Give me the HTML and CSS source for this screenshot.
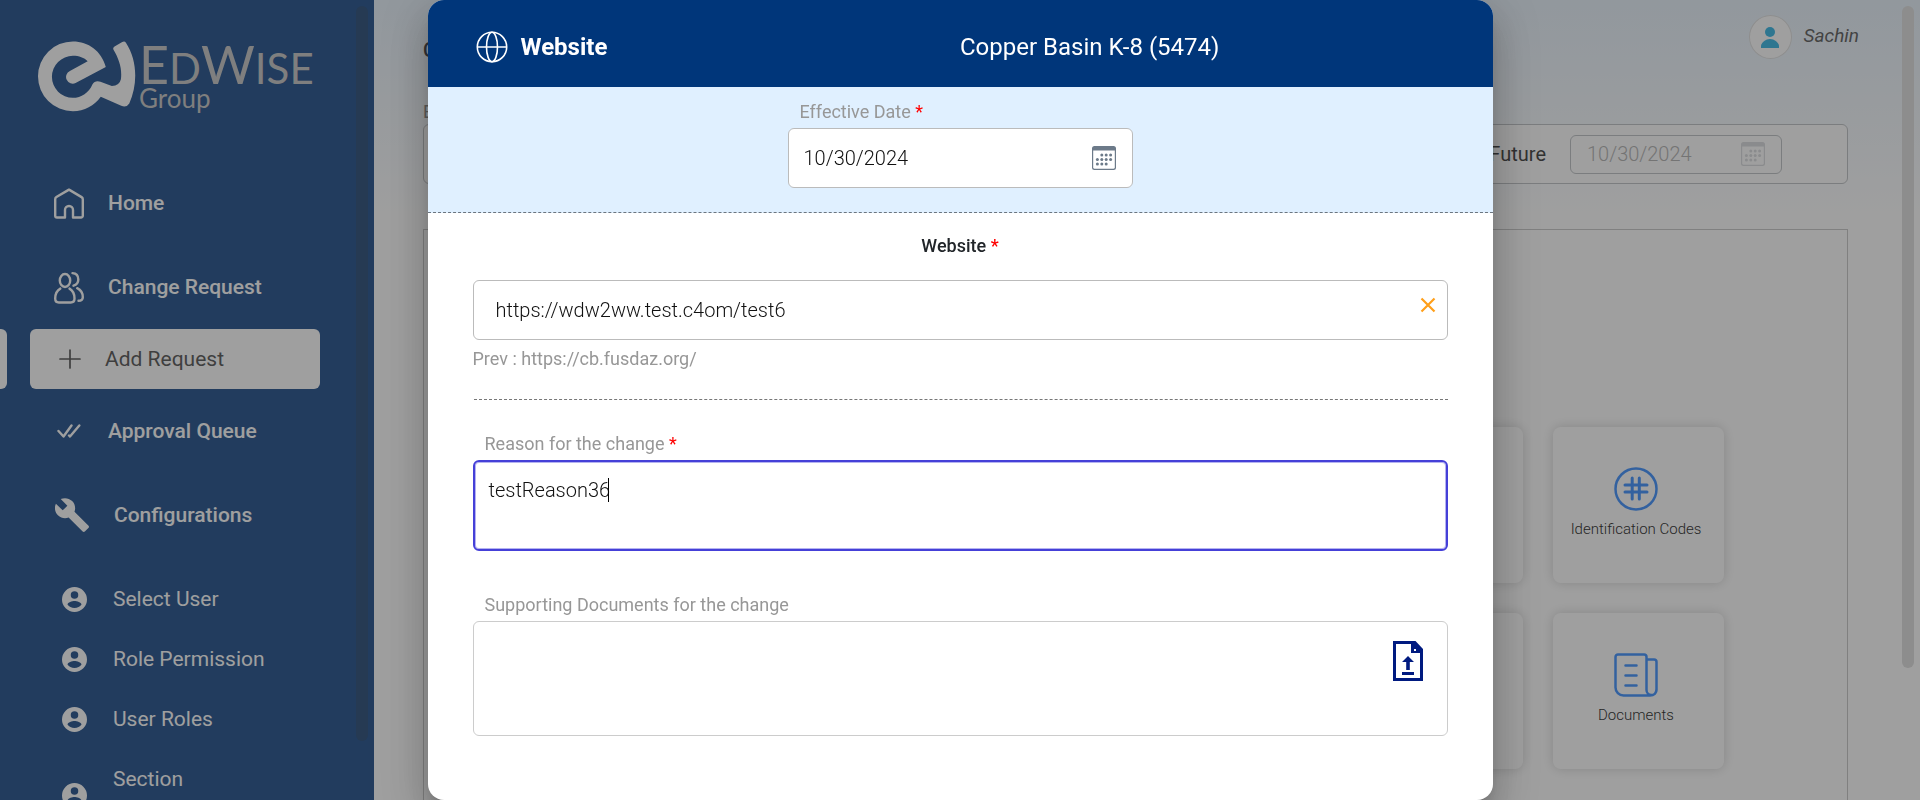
FILE: index.html
```html
<!DOCTYPE html>
<html lang="en">
<head>
<meta charset="utf-8">
<meta name="viewport" content="width=device-width, initial-scale=1">
<title>EdWise Group - Add Request</title>
<link rel="stylesheet" href="styles.css">
</head>
<body>
<svg class="sprite" aria-hidden="true">
  <symbol id="i-user" viewBox="2 2 20 20"><path d="M12 2a10 10 0 1 0 0 20 10 10 0 0 0 0-20zm0 3.300a3 3 0 1 1 0 6 3 3 0 0 1 0-6zm0 13.500c-2.400 0-4.400-1-5.600-2.800.1-1.900 3.700-2.900 5.600-2.900s5.500 1 5.600 2.900c-1.200 1.800-3.200 2.800-5.600 2.800z"/></symbol>
  <symbol id="i-calendar" viewBox="0 0 24 24"><path fill-rule="evenodd" d="M2.500 0h19A2.500 2.500 0 0 1 24 2.500v19a2.500 2.500 0 0 1-2.500 2.500h-19A2.500 2.500 0 0 1 0 21.500v-19A2.500 2.500 0 0 1 2.500 0zM1.200 4.600v17c0 .7.500 1.200 1.300 1.200h19c.8 0 1.300-.5 1.300-1.200v-17z"/><g><circle cx="9.800" cy="9" r="1.500"/><circle cx="14.200" cy="9" r="1.500"/><circle cx="18.600" cy="9" r="1.500"/><circle cx="5.400" cy="13.500" r="1.500"/><circle cx="9.800" cy="13.500" r="1.500"/><circle cx="14.200" cy="13.500" r="1.500"/><circle cx="18.600" cy="13.500" r="1.500"/><circle cx="5.400" cy="18" r="1.500"/><circle cx="9.800" cy="18" r="1.500"/><circle cx="14.200" cy="18" r="1.500"/></g></symbol>
</svg>

<div class="app">
  <aside class="sidebar">
    <a class="logo" href="#" aria-label="EdWise Group">
      <svg class="logo-mark" viewBox="114 123 292 211" aria-hidden="true"><path d="M316 200C303 152 264 124 218 124A104 104 0 0 0 218 332C252 332 282 316 301 289L362 316Q378 322 386 309C412 250 410 180 376 128Q372 122 365 126L342 139Q336 143 339 149C356 178 365 206 361 237Q357 256 334 257L300 244Q284 239 276 252C266 276 243 292 218 292A62 62 0 1 1 218 167C236 167 252 173 262 183L209 212A19 19 0 0 0 226 248Z"/></svg>
      <span class="logo-text">
        <span class="logo-name">E<small>D</small>W<small>ISE</small></span>
        <span class="logo-group">Group</span>
      </span>
    </a>
    <nav class="nav">
      <a class="nav-item" href="#"><span class="nav-icon"><svg width="30" height="31" viewBox="0 0 30 31" class="line"><path d="M11 29.500H3A1.800 1.800 0 0 1 1.200 27.700V11.300c0-1 .4-1.700 1.200-2.200L15 1.600l12.600 7.500c.8.500 1.200 1.200 1.200 2.200v16.400a1.800 1.800 0 0 1-1.800 1.800h-8v-7.500a4 4 0 0 0-8 0z"/></svg></span>Home</a>
      <a class="nav-item nav-tight" href="#"><span class="nav-icon"><svg width="30" height="33" viewBox="0 0 30 33" class="line"><ellipse cx="11" cy="9.500" rx="5.200" ry="6.500"/><path d="M6.300 17.600C3 19.500 1.200 23 1.200 27.500c0 2.500 1.200 4 3.600 4h12c2.500 0 3.700-1.500 3.700-4 0-4.500-1.700-8-5-9.900M18.500 2.100c3.500.2 5.800 2.700 5.800 6.400 0 3-1.700 5.200-4.800 6.200M23.200 17.200c3.500 1.700 5.600 5 5.600 9 0 2.300-1.500 3.600-4.300 3.600"/></svg></span>Change Request</a>
      <a class="nav-item nav-tight active" href="#" aria-current="page"><span class="nav-icon"><svg width="22" height="20" viewBox="0 0 22 20" class="thin"><path d="M11 1v18M1 10h20"/></svg></span>Add Request</a>
      <a class="nav-item" href="#"><span class="nav-icon"><svg width="24" height="14" viewBox="0 0 24 14" class="line"><path d="M1.500 7l5 5.500 8-11M13 12.500l9.300-11M12 11.500l1 1"/></svg></span>Approval Queue</a>
      <a class="nav-item wide" href="#"><span class="nav-icon"><svg width="34" height="34" viewBox="1 1 22 22"><path d="M22.700 19l-9.100-9.100c.9-2.300.4-5-1.500-6.900-2-2-5-2.400-7.400-1.300L9 6 6 9 1.600 4.700C.4 7.100.9 10.100 2.900 12.100c1.900 1.900 4.600 2.400 6.900 1.500l9.100 9.100c.4.400 1 .4 1.400 0l2.300-2.300c.5-.4.500-1.100.1-1.400z"/></svg></span>Configurations</a>
      <div class="subnav">
        <a class="sub-item" href="#"><svg width="25" height="25"><use href="#i-user"/></svg>Select User</a>
        <a class="sub-item" href="#"><svg width="25" height="25"><use href="#i-user"/></svg>Role Permission</a>
        <a class="sub-item" href="#"><svg width="25" height="25"><use href="#i-user"/></svg>User Roles</a>
        <a class="sub-item tall" href="#"><svg width="25" height="25"><use href="#i-user"/></svg>Section</a>
      </div>
    </nav>
    <span class="thumb side-thumb"></span>
    <span class="active-tab"></span>
  </aside>

  <main class="page">
    <header class="topbar">
      <h1 class="page-title">C</h1>
      <div class="user">
        <span class="avatar"><svg width="18" height="21" viewBox="0 0 18 21"><circle cx="9" cy="5" r="5"/><path d="M0 21v-2.500C1 15 4.600 12 9 12s8 3 9 6.500V21z"/></svg></span>
        <em>Sachin</em>
      </div>
    </header>
    <p class="filter-label">E</p>
    <section class="filter">
      <label for="future-date">Future</label>
      <span class="future-box"><input id="future-date" type="text" value="10/30/2024" disabled><svg width="24" height="24"><use href="#i-calendar"/></svg></span>
    </section>
    <section class="panel">
      <div class="tiles">
        <button class="tile" type="button" aria-label="Section"></button>
        <button class="tile" type="button"><svg width="44" height="44" viewBox="0 0 44 44"><circle cx="22" cy="22" r="20.500"/><path d="M18.200 11v21M25.300 11v21M11 18h22M11 25h22" stroke-width="3"/></svg>Identification Codes</button>
        <button class="tile" type="button" aria-label="Section"></button>
        <button class="tile" type="button"><svg width="44" height="44" viewBox="0 0 44 44"><path d="M36 42.500H9.500a8 8 0 0 1-8-8V4A2.500 2.500 0 0 1 4 1.500h26A2.500 2.500 0 0 1 32.500 4v33a5 5 0 0 0 10 0V9A2.500 2.500 0 0 0 40 6.500h-7.500M42.500 36c0 4-2.500 6.500-6.500 6.500M11.500 12.500h11M11.500 22.500h11M11.500 32.500h11"/></svg>Documents</button>
      </div>
    </section>
    <span class="thumb page-thumb"></span>
  </main>
</div>

<div class="backdrop">
  <form class="dialog" role="dialog" aria-labelledby="dialog-title">
    <header class="dialog-head">
      <h2 id="dialog-title"><svg width="32" height="32" viewBox="0 0 32 32"><circle cx="16" cy="16" r="14.700"/><ellipse cx="16" cy="16" rx="5.500" ry="14.700"/><path d="M1.300 16h29.400"/></svg>Website</h2>
      <p>Copper Basin K-8 (5474)</p>
    </header>
    <div class="date-band">
      <div class="date-field">
        <label class="label" for="effective">Effective Date <b>*</b></label>
        <div class="date-box"><input id="effective" type="text" value="10/30/2024"><svg width="24" height="24"><use href="#i-calendar"/></svg></div>
      </div>
    </div>
    <div class="dialog-body">
      <label class="section-label" for="site">Website <b>*</b></label>
      <div class="site-box">
        <input id="site" type="text" value="https://wdw2ww.test.c4om/test6">
        <button type="button" aria-label="Clear"><svg width="16" height="16" viewBox="0 0 16 16"><path d="M1.500 1.500l13 13M14.500 1.500l-13 13"/></svg></button>
      </div>
      <p class="prev">Prev : https://cb.fusdaz.org/</p>
      <hr>
      <label class="label" for="reason">Reason for the change <b>*</b></label>
      <div class="reason-box">
        <textarea id="reason" rows="2">testReason36</textarea>
        <span class="caret"></span>
      </div>
      <label class="label" for="upload">Supporting Documents for the change</label>
      <div class="upload-box">
        <button id="upload" type="button" aria-label="Upload"><svg width="30" height="40" viewBox="0 0 30 40"><path fill-rule="evenodd" d="M0 0h22.500L30 8v32H0zM3 3v34h24V12h-9V3zM21 8v2h2V8z"/><path d="M15 15l6 6h-4.200v8h-3.600v-8H9zM9 31h12v3H9z"/></svg></button>
      </div>
    </div>
  </form>
</div>
</body>
</html>
```
FILE: styles.css
```css
* { box-sizing: border-box; }
body {
  margin: 0;
  height: 100vh;
  overflow: hidden;
  font-family: Roboto, "Liberation Sans", sans-serif;
  font-size: 20px;
  color: #212529;
}
h1, h2, p { margin: 0; font-size: inherit; }
a { color: inherit; text-decoration: none; }
button, input, textarea { font: inherit; color: inherit; margin: 0; padding: 0; border: 0; background: none; outline: 0; }
input, textarea { font-weight: 350; }
svg { display: block; flex: none; fill: currentColor; }
b { font-weight: inherit; color: #f00; }
.sprite { position: absolute; width: 0; height: 0; }
.line, .thin { fill: none; stroke: currentColor; stroke-width: 2.400; stroke-linecap: round; stroke-linejoin: round; }
.thin { stroke-width: 1.700; }

.app { display: flex; height: 100%; }
.thumb { position: absolute; top: 6px; width: 12px; border-radius: 6px; }

/* Sidebar */
.sidebar {
  position: relative;
  flex: none;
  width: 374px;
  padding: 41px 54px 0 30px;
  overflow: hidden;
  background: #00367a;
  color: #fff;
  font-size: 21px;
}
.side-thumb { right: 6px; height: 735px; background: rgba(34, 34, 34, .25); }
.logo { display: flex; gap: 3px; padding-left: 8px; height: 72px; }
.logo-mark { width: 98px; height: 71px; }
.logo-text { display: flex; flex-direction: column; font-family: Lato, sans-serif; color: #bdbdbd; white-space: nowrap; }
.logo-name { font-size: 52px; line-height: 46px; }
.logo-name small { font-size: 42px; }
.logo-group { font-size: 26px; line-height: 14px; }
.nav { display: flex; flex-direction: column; padding-top: 60px; }
.nav-item {
  display: flex;
  align-items: center;
  gap: 24px;
  height: 60px;
  margin-bottom: 24px;
  padding-left: 24px;
  border-radius: 6px;
  font-weight: 500;
}
.nav-tight { margin-bottom: 12px; }
.nav-icon { display: flex; justify-content: center; width: 30px; }
.wide .nav-icon { width: 36px; }
.active { gap: 21px; background: #fff; color: #3b3b3b; font-weight: 400; }
.active .nav-icon { padding-left: 2px; }
.active-tab { position: absolute; left: -8px; top: 329px; width: 15px; height: 60px; border-radius: 6px; background: #fff; }
.sub-item { display: flex; align-items: center; gap: 26px; height: 60px; padding-left: 32px; }
.tall { line-height: 36px; align-items: flex-start; padding-top: 12px; }
.tall svg { margin-top: 22px; }

/* Page */
.page {
  position: relative;
  flex: 1;
  display: flex;
  flex-direction: column;
  padding: 15px 72px 0 49px;
  background: linear-gradient(#e4f0fb, #fff 220px);
}
.page-thumb { right: 6px; height: 662px; background: #dadada; }
.topbar { display: flex; justify-content: space-between; align-items: flex-start; height: 84px; }
.page-title { padding-top: 22px; font-weight: 500; line-height: 26px; }
.user { display: flex; align-items: center; gap: 12px; padding-right: 5px; margin-right: -16px; color: #444; font-size: 19px; line-height: 42px; }
.user em { padding-bottom: 2px; }
.avatar { display: flex; justify-content: center; align-items: center; width: 43px; height: 44px; border: 1px solid #dcdcdc; border-radius: 50%; background: #fff; color: #1aabe0; }
.filter-label { color: #777; font-size: 18px; line-height: 25px; }
.filter {
  display: flex;
  justify-content: flex-end;
  align-items: center;
  gap: 24px;
  flex: none;
  height: 60px;
  padding-right: 65px;
  border: 1px solid #b5b9bd;
  border-radius: 6px;
  background: #fff;
  color: #222;
}
.future-box {
  display: flex;
  align-items: center;
  width: 212px;
  height: 39px;
  padding: 0 16px;
  border: 1px solid #b5b9bd;
  border-radius: 6px;
  color: #d4d7da;
}
.future-box input { flex: 1; min-width: 0; color: #a8a8a8; }
.panel { flex: 1; margin-top: 45px; padding: 197px 123px 0 0; border: 1px solid #c0c0c0; border-bottom: 0; }
.tiles { display: grid; grid-template-columns: 171px 171px; grid-auto-rows: 156px; gap: 30px; justify-content: end; }
.tile {
  display: flex;
  flex-direction: column;
  align-items: center;
  gap: 8px;
  padding: 40px 5px 0 0;
  border-radius: 8px;
  background: #fff;
  box-shadow: 0 0 12px rgba(0, 0, 0, .2);
  font-size: 15px;
  line-height: 20px;
  font-weight: 350;
  color: #000;
}
.tile svg { fill: none; stroke: #2482ff; stroke-width: 2.500; stroke-linecap: round; stroke-linejoin: round; }

/* Dialog */
.backdrop { position: fixed; inset: 0; display: flex; justify-content: center; background: rgba(67, 67, 67, .51); }
.dialog {
  display: flex;
  flex-direction: column;
  width: 100%;
  max-width: 1065px;
  overflow: hidden;
  border-radius: 16px;
  background: #fff;
  box-shadow: 0 11px 15px -7px rgba(0, 0, 0, .2), 0 24px 38px 3px rgba(0, 0, 0, .14), 0 9px 46px 8px rgba(0, 0, 0, .12);
}
.dialog-head {
  display: grid;
  grid-template-columns: 1fr 1fr;
  align-items: center;
  height: 87px;
  padding-top: 6px;
  background: #00367a;
  color: #fff;
  font-size: 24px;
}
.dialog-head h2 { display: flex; align-items: center; gap: 13px; padding-left: 48px; font-weight: 700; }
.dialog-head svg { fill: none; stroke: currentColor; stroke-width: 1.600; }
.date-band { display: flex; justify-content: center; padding: 13px 0 24px; border-bottom: 1px dashed #6c7680; background: #e0f0ff; }
.label { display: block; padding-left: 12px; font-size: 18px; line-height: 24px; color: #979797; }
.date-field { width: 345px; }
.date-box {
  display: flex;
  align-items: center;
  height: 60px;
  margin-top: 4px;
  padding: 0 16px 0 15px;
  border: 1px solid #bbb;
  border-radius: 6px;
  background: #fff;
  color: #6c7a89;
}
.date-box input { flex: 1; min-width: 0; color: #111; }
.dialog-body { display: flex; flex-direction: column; padding: 21px 45px 0; }
.section-label { font-size: 18px; font-weight: 500; line-height: 24px; text-align: center; }
.site-box { display: flex; height: 60px; margin-top: 22px; padding: 0 11px 0 22px; border: 1px solid #bbb; border-radius: 6px; color: #111; }
.site-box input { flex: 1; min-width: 0; }
.site-box button { align-self: flex-start; padding-top: 16px; color: #ff9f1a; }
.site-box svg { stroke: currentColor; stroke-width: 2.200; }
.prev { margin-top: 7px; font-size: 18px; line-height: 24px; color: #979797; }
hr { align-self: stretch; margin: 28px 0 32px 1px; border: 0; border-top: 1px dashed #777; }
.reason-box { position: relative; display: flex; margin: 4px 0 42px; }
.reason-box textarea { flex: 1; height: 91px; padding: 13px 14px; border: 2px solid #4540d8; border-radius: 6px; box-shadow: inset 0 0 0 1px #b5b3f0; line-height: 30px; color: #111; resize: none; }
.caret { position: absolute; left: 135px; top: 18px; width: 1px; height: 24px; background: #000; }
.upload-box { display: flex; justify-content: flex-end; align-items: flex-start; height: 115px; margin-top: 4px; padding: 19px 24px; border: 1px solid #ccc; border-radius: 6px; }
.upload-box button { color: #001a80; }
```
